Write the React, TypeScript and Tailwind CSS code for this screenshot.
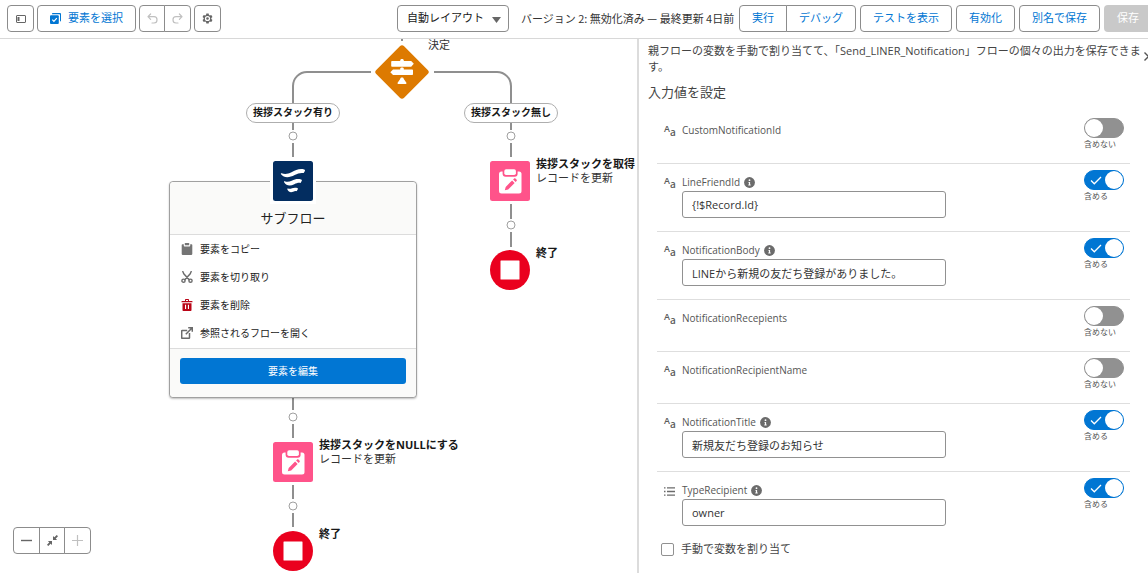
import React, { useState } from 'react';
import clsx from 'clsx';

type Field = {
  name: string;
  kind: 'text' | 'list';
  info?: boolean;
  value?: string;
};

const FIELDS: Field[] = [
  { name: 'CustomNotificationId', kind: 'text' },
  { name: 'LineFriendId', kind: 'text', info: true, value: '{!$Record.Id}' },
  { name: 'NotificationBody', kind: 'text', info: true, value: 'LINEから新規の友だち登録がありました。' },
  { name: 'NotificationRecepients', kind: 'text' },
  { name: 'NotificationRecipientName', kind: 'text' },
  { name: 'NotificationTitle', kind: 'text', info: true, value: '新規友だち登録のお知らせ' },
  { name: 'TypeRecipient', kind: 'list', info: true, value: 'owner' },
];

/* ---------- Icons ---------- */

const PanelIcon = () => (
  <svg className="w-[10px] h-2" viewBox="0 0 10 8" fill="none" stroke="#666">
    <rect x="0.5" y="0.5" width="9" height="7" rx="0.5" />
    <rect x="1.5" y="2" width="2" height="4" fill="#666" stroke="none" />
  </svg>
);

const SelectIcon = () => (
  <svg className="w-[11px] h-[11px]" viewBox="0 0 11 11" fill="none">
    <path d="M3 0h7a1 1 0 0 1 1 1v6.500a1 1 0 0 1-1 1V1.800a.6.6 0 0 0-.6-.6H2A1 1 0 0 1 3 0z" fill="#0176d3" />
    <rect x="0" y="2.200" width="8.800" height="8.800" rx="1" fill="#0176d3" />
    <path d="M2.300 6.600l1.600 1.700 2.900-3.200" stroke="#fff" strokeWidth="1.200" />
  </svg>
);

const UndoIcon = ({ flip }: { flip?: boolean }) => (
  <svg className={clsx('w-[11px] h-[11px]', flip && '-scale-x-100')} viewBox="0 0 11 11" fill="none" stroke="#c0c0c0" strokeWidth="1.200">
    <path d="M3.600 1L1 3.700l2.600 2.700M1 3.700h6a3 3 0 0 1 3 3v.3a3 3 0 0 1-3 3H5" strokeLinecap="round" strokeLinejoin="round" />
  </svg>
);

const GearIcon = () => (
  <svg className="w-[11px] h-[11px]" viewBox="0 0 24 24" fill="#666">
    <path
      fillRule="evenodd"
      d="M9.500 1h5l.7 3.300 1.900 1.100 3.200-1 2.500 4.300-2.500 2.200v2.200l2.500 2.200-2.500 4.300-3.200-1-1.900 1.100-.7 3.300h-5l-.7-3.300-1.900-1.100-3.200 1-2.500-4.300 2.500-2.200v-2.200L1.200 8.700l2.500-4.300 3.200 1 1.900-1.100zM12 6.300a5.700 5.700 0 1 0 0 11.400 5.700 5.700 0 0 0 0-11.400z"
    />
    <circle cx="12" cy="12" r="2.800" />
  </svg>
);

const ClipboardIcon = () => (
  <svg className="w-3 h-3" viewBox="0 0 12 12" fill="#747474">
    <path d="M1.500 1.300h1.300v1.200c0 .6.400 1 1 1h4.400c.6 0 1-.4 1-1V1.300h1.300c.5 0 .8.300.8.800v9c0 .5-.3.800-.8.800h-9c-.5 0-.8-.3-.8-.8v-9c0-.5.300-.8.800-.8z" />
    <path d="M4.300 0h3.400c.3 0 .5.200.5.500v1.700H3.800V.5c0-.3.200-.5.500-.5z" />
  </svg>
);

const CutIcon = () => (
  <svg className="w-3 h-3" viewBox="0 0 12 12" fill="none" stroke="#6b6b6b" strokeWidth="1.400">
    <path d="M1.800.5l1 2.300 5.400 5.900M10.200.5l-1 2.300-5.400 5.900" strokeLinecap="round" />
    <circle cx="2.500" cy="9.700" r="1.600" />
    <circle cx="9.500" cy="9.700" r="1.600" />
  </svg>
);

const TrashIcon = () => (
  <svg className="w-3 h-3" viewBox="0 0 12 12" fill="#ba0517">
    <path d="M1 2h3V1c0-.6.400-1 1-1h2c.6 0 1 .4 1 1v1h3c.3 0 .5.200.5.500V3.300H.5V2.500C.5 2.200.7 2 1 2zm4-1v1h2V1z" fillRule="evenodd" />
    <path d="M1.500 4.200h9V11c0 .6-.4 1-1 1h-7c-.6 0-1-.4-1-1zM4 5.800V10h1.100V5.800zm2.900 0V10H8V5.800z" fillRule="evenodd" />
  </svg>
);

const OpenIcon = () => (
  <svg className="w-3 h-3" viewBox="0 0 12 12" fill="none" stroke="#6b6b6b" strokeWidth="1.500">
    <path d="M6.200 3.500H1.200c-.3 0-.5.200-.5.500v6.800c0 .3.200.5.500.5H8c.3 0 .5-.2.500-.5V6" />
    <path d="M7.200.7h4.100v4.100M11 1L4.800 7.200" />
  </svg>
);

const DecisionIcon = () => (
  <svg className="w-[54px] h-[54px]" viewBox="0 0 54 54">
    <rect x="7.300" y="7.300" width="39.400" height="39.400" rx="3" transform="rotate(45 27 27)" fill="#dd7a01" />
    <g fill="#fff">
      <path d="M17 16h8.200v-.5c0-1 .7-1.500 1.800-1.500s1.800.5 1.800 1.500v.5h7.400l2.600 2.800-2.600 2.900H17c-.5 0-.8-.3-.8-.8v-4.100c0-.5.300-.8.800-.8z" />
      <path d="M18 24.400h7.200v-.6c0-1 .7-1.400 1.800-1.400s1.800.4 1.800 1.400v.6h8.400c.5 0 .8.300.8.800v4c0 .5-.3.800-.8.800H18l-2.700-2.800z" />
      <path d="M27 32.600c1 0 1.600.5 1.800 1.300l2.600 3.900c.3.600 0 1.200-.6 1.200h-7.600c-.6 0-.9-.6-.6-1.200l2.600-3.900c.2-.8.8-1.300 1.800-1.300z" />
    </g>
  </svg>
);

const SubflowIcon = () => (
  <svg className="w-10 h-10" viewBox="0 0 40 40">
    <rect width="40" height="40" rx="2.500" fill="#032d60" />
    <g fill="#fff">
      <path d="M8.600 12.300C12 13.600 15 13 18.500 11.300 22.500 9.200 26.500 7.200 31.200 8.500c.7.200 1 .8.700 1.400l-1.200 2.200c-3.200-.6-5.700.3-9 2-5.200 2.700-10.700 3.200-13.700-.9-.4-.6 0-1.100.6-.9z" />
      <path d="M11.700 20.300c2.600.9 4.600.5 7-.6 3.200-1.500 6-2.300 9.500-1.200.6.200.9.800.6 1.300l-1.200 2.100c-2.300-.4-4 .2-6.300 1.300-4 1.900-7.900 1.800-10.200-2-.3-.6 0-1.100.6-.9z" />
      <path d="M15 27.600c1.500.5 2.800.2 4-.3 1.700-.7 3.400-.9 5.300-.2.600.2.800.7.5 1.200l-1.100 1.900c-1.300-.3-2.300 0-3.500.5-2.400 1-4.500.5-5.800-2.200-.3-.6.100-1.100.6-.9z" />
    </g>
  </svg>
);

const RecordUpdateIcon = () => (
  <svg className="w-10 h-10" viewBox="0 0 40 40">
    <rect width="40" height="40" rx="2.500" fill="#ff538a" />
    <rect x="9" y="10.500" width="22.500" height="22" rx="2.500" fill="#fff" />
    <rect x="12.600" y="6.800" width="15" height="9" rx="3" fill="#ff538a" />
    <rect x="14.300" y="8.300" width="11.600" height="5.700" rx="1.800" fill="#fff" />
    <path d="M14.800 29.200l.9-3.300 6.400-6.400 2.500 2.500-6.400 6.400zM23.100 18.500l1.300-1.200c.7-.6 2.900 1.500 2.400 2.400l-1.200 1.300z" fill="#ff538a" />
  </svg>
);

const EndIcon = () => (
  <svg className="w-10 h-10" viewBox="0 0 40 40">
    <circle cx="20" cy="20" r="20" fill="#ea001e" />
    <rect x="10.500" y="10.500" width="19" height="19" rx="0.500" fill="#fff" />
  </svg>
);

const FitIcon = () => (
  <svg className="w-[11px] h-[11px]" viewBox="0 0 11 11" fill="#666" stroke="#666">
    <path d="M6 .9V5h4.100zM5 10.100V6H.9z" stroke="none" />
    <path d="M7.500 3.500L10.400.6M3.500 7.500L.6 10.400" strokeWidth="1.800" />
  </svg>
);

const InfoIcon = () => (
  <svg className="w-[11px] h-[11px]" viewBox="0 0 11 11">
    <circle cx="5.500" cy="5.500" r="5.400" fill="#6b6b6b" />
    <circle cx="5.500" cy="3.200" r="0.900" fill="#fff" />
    <path d="M4.400 4.900h1.700v2.700h.6v.8H4.300v-.8h.6V5.700h-.5z" fill="#fff" />
  </svg>
);

const ListIcon = () => (
  <svg className="w-[11px] h-[9px]" viewBox="0 0 11 9" stroke="#6b6b6b" strokeWidth="1.300">
    <path d="M0 .8h1.500M3 .8h8M0 4.500h1.500M3 4.500h8M0 8.200h1.500M3 8.200h8" />
  </svg>
);

/* ---------- Toolbar ---------- */

const box = 'h-[27px] flex items-center justify-center border border-[#8c8c8c] bg-white';
const link = 'px-3 text-[#0176d3] whitespace-nowrap';

const Toolbar = () => (
  <header className="h-[39px] shrink-0 flex items-center border-b border-[#d8d8d8] pl-[7px] pb-px overflow-hidden">
    <div className="flex gap-[3px]">
      <button aria-label="ツールボックス" className={clsx(box, 'w-[27px] rounded')}><PanelIcon /></button>
      <button className={clsx(box, link, 'w-[99px] gap-[7px] rounded')}>
        <SelectIcon />
        要素を選択
      </button>
      <div className="flex">
        <button aria-label="元に戻す" className={clsx(box, 'w-[26px] rounded-l')}><UndoIcon /></button>
        <button aria-label="やり直す" className={clsx(box, 'w-[27px] -ml-px rounded-r')}><UndoIcon flip /></button>
      </div>
      <button aria-label="設定" className={clsx(box, 'w-[27px] rounded')}><GearIcon /></button>
    </div>

    <div className="ml-auto -mr-1 shrink-0 flex items-center">
      <div className="relative">
        <select aria-label="レイアウト" className="h-[27px] w-28 appearance-none rounded border border-[#8c8c8c] bg-white pl-[9px] text-[#181818]">
          <option>自動レイアウト</option>
          <option>自由形式</option>
        </select>
        <svg className="absolute right-2 top-3 w-[9px] h-[6px] pointer-events-none" viewBox="0 0 9 6" fill="#666">
          <path d="M0 0h9L4.500 6z" />
        </svg>
      </div>
      <p className="w-[230px] pl-3 whitespace-nowrap font-['Noto_Sans_CJK_JP',sans-serif]">バージョン 2: 無効化済み — 最終更新 4日前</p>
      <div className="flex gap-1">
        <div className="flex">
          <button className={clsx(box, link, 'rounded-l')}>実行</button>
          <button className={clsx(box, link, '-ml-px rounded-r')}>デバッグ</button>
        </div>
        <button className={clsx(box, link, 'rounded')}>テストを表示</button>
        <button className={clsx(box, link, 'rounded')}>有効化</button>
        <button className={clsx(box, link, 'rounded')}>別名で保存</button>
        <button disabled className="h-[27px] px-[13px] rounded bg-[#c9c9c9] text-white whitespace-nowrap">保存</button>
      </div>
    </div>
  </header>
);

/* ---------- Canvas ---------- */

const Connectors = () => (
  <svg className="absolute left-0 top-0 w-[637px] h-[534px]" viewBox="0 0 637 534" fill="none">
    <g stroke="#8f8f8f" strokeWidth="2">
      <path d="M402 0v2" />
      <path d="M371 33h-64a14 14 0 0 0-14 14v17M434 33h63a14 14 0 0 1 14 14v17" />
      <path d="M293 84v7M293 104v14M511 84v7M511 104v14" />
      <path d="M511 165v15M511 193v15" />
      <path d="M293 359v12M293 385v14M293 446v14M293 474v14" />
    </g>
    <g stroke="#a0a0a0" fill="#fff">
      <circle cx="293" cy="97" r="4" />
      <circle cx="511" cy="97" r="4" />
      <circle cx="511" cy="186" r="4" />
      <circle cx="293" cy="378" r="4" />
      <circle cx="293" cy="467" r="4" />
    </g>
  </svg>
);

const Pill = ({ className, children }: { className: string; children: React.ReactNode }) => (
  <div className={clsx('absolute h-5 w-[94px] flex items-center justify-center rounded-full border border-[#aeaeae] bg-white pb-[2px] text-[10px] font-bold text-[#181818] whitespace-nowrap', className)}>
    {children}
  </div>
);

type NodeProps = { className: string; icon: React.ReactNode; title: string; subtitle?: string };

const FlowNode = ({ className, icon, title, subtitle }: NodeProps) => (
  <div className={clsx('absolute flex gap-[6px]', className)}>
    {icon}
    <div className="-mt-1 leading-[14px] text-[#181818] whitespace-nowrap">
      <p className="font-bold">{title}</p>
      {subtitle && <p className="text-[#333]">{subtitle}</p>}
    </div>
  </div>
);

const MENU = [
  { icon: <ClipboardIcon />, label: '要素をコピー' },
  { icon: <CutIcon />, label: '要素を切り取り' },
  { icon: <TrashIcon />, label: '要素を削除' },
  { icon: <OpenIcon />, label: '参照されるフローを開く' },
];

const SubflowCard = () => (
  <div className="absolute left-[169px] top-[142px] w-[248px] rounded border border-[#a0a0a0] bg-white shadow-[0_1px_2px_rgba(0,0,0,0.25)] text-[#222]">
    <div className="absolute left-[100px] -top-[24px] bg-white p-[3px]">
      <SubflowIcon />
    </div>
    <h2 className="h-[53px] pt-[26px] rounded-t border-b border-[#dcdcdc] bg-[#fafaf9] text-center text-[13px] leading-5">サブフロー</h2>
    <ul className="text-[10px] pb-px">
      {MENU.map((item) => (
        <li key={item.label}>
          <button className="w-full h-7 flex items-center gap-[7px] pl-[11px] mt-px first:mt-0">
            {item.icon}
            {item.label}
          </button>
        </li>
      ))}
    </ul>
    <div className="border-t border-[#dcdcdc] rounded-b bg-[#fafaf9] px-[10px] pt-[9px] pb-[13px]">
      <button className="block w-full h-[26px] rounded-[3px] bg-[#0176d3] text-[10px] text-white">要素を編集</button>
    </div>
  </div>
);

const Canvas = () => (
  <main className="relative flex-1 min-w-0 bg-white">
    <Connectors />
    <div className="absolute left-[375px] top-[6px]"><DecisionIcon /></div>
    <p className="absolute left-[428px] top-0 leading-[11px]">決定</p>
    <Pill className="left-[246px] top-16">挨拶スタック有り</Pill>
    <Pill className="left-[464px] top-16">挨拶スタック無し</Pill>
    <SubflowCard />
    <FlowNode className="left-[490px] top-[122px]" icon={<RecordUpdateIcon />} title="挨拶スタックを取得" subtitle="レコードを更新" />
    <FlowNode className="left-[490px] top-[211px]" icon={<EndIcon />} title="終了" />
    <FlowNode className="left-[273px] top-[403px]" icon={<RecordUpdateIcon />} title="挨拶スタックをNULLにする" subtitle="レコードを更新" />
    <FlowNode className="left-[273px] top-[492px]" icon={<EndIcon />} title="終了" />

    <div className="absolute left-[13px] bottom-[19px] flex">
      <button aria-label="縮小" className={clsx(box, 'w-[27px] rounded-l')}>
        <svg className="w-[11px] h-[11px]" viewBox="0 0 11 11" stroke="#666" strokeWidth="1.400"><path d="M0 5.500h11" /></svg>
      </button>
      <button aria-label="全体を表示" className={clsx(box, 'w-[26px] -ml-px')}><FitIcon /></button>
      <button aria-label="拡大" className={clsx(box, 'w-[27px] -ml-px rounded-r')}>
        <svg className="w-[11px] h-[11px]" viewBox="0 0 11 11" stroke="#c0c0c0" strokeWidth="1.200"><path d="M0 5.500h11M5.500 0v11" /></svg>
      </button>
    </div>
  </main>
);

/* ---------- Properties panel ---------- */

const Toggle = ({ id, on, onChange }: { id: string; on: boolean; onChange: () => void }) => (
  <label className="ml-auto w-[46px] shrink-0 cursor-pointer">
    <input
      type="checkbox"
      role="switch"
      aria-label={id}
      checked={on}
      onChange={onChange}
      className="peer sr-only"
    />
    <span className="flex items-center w-10 h-5 rounded-full border border-[#919191] bg-[#919191] peer-checked:border-[#0176d3] peer-checked:bg-[#0176d3]">
      {on && (
        <svg className="ml-[5px] w-3 h-[9px]" viewBox="0 0 12 9" fill="none" stroke="#fff" strokeWidth="1.300">
          <path d="M1 4.500L4.300 7.800 11 1" />
        </svg>
      )}
      <span className={clsx('w-[18px] h-[18px] rounded-full bg-white', on && 'ml-auto')} />
    </span>
    <span className="block pt-px text-[8px] leading-[10px] text-[#555] whitespace-nowrap">{on ? '含める' : '含めない'}</span>
  </label>
);

const FieldRow = ({ field }: { field: Field }) => {
  const [on, setOn] = useState(field.value !== undefined);
  const [value, setValue] = useState(field.value ?? '');

  return (
    <li className={clsx('flex border-t border-[#dedede] first:border-transparent pt-[6px] pl-[7px]', field.value === undefined ? 'h-[52px]' : 'h-[68px]')}>
      <div className="w-[18px] shrink-0 pt-[6px] text-[#5c5c5c]">
        {field.kind === 'text' ? (
          <span className="flex items-start leading-none" aria-hidden="true">
            <span className="text-[9px] leading-[9px] font-semibold">A</span>
            <span className="pt-1 text-[10px] leading-[9px] font-semibold">a</span>
          </span>
        ) : (
          <span className="block pt-[3px]"><ListIcon /></span>
        )}
      </div>
      <div className="w-[264px]">
        <div className="h-[21px] pt-[3px] flex items-center gap-1 text-[10px] text-[#555]">
          <label htmlFor={field.name}>{field.name}</label>
          {field.info && <InfoIcon />}
        </div>
        {on && field.value !== undefined && (
          <input
            id={field.name}
            value={value}
            onChange={(e) => setValue(e.target.value)}
            className="block w-full h-[27px] rounded-[3px] border border-[#919191] px-[9px] text-[#333]"
          />
        )}
      </div>
      <Toggle id={field.name} on={on} onChange={() => setOn(!on)} />
    </li>
  );
};

const PropertiesPanel = () => (
  <aside className="relative w-[511px] shrink-0 overflow-hidden border-l-2 border-[#dcdcdc] bg-white pl-[9px] pr-[18px] pt-1 text-[#444]">
    <p className="-mr-[14px] leading-4">
      親フローの変数を手動で割り当てて、「Send_LINER_Notification」フローの個々の出力を保存できます。
    </p>
    <h3 className="pt-2 text-[13px] leading-[18px]">入力値を設定</h3>
    <ul className="ml-[9px] pt-[10px]">
      {FIELDS.map((field) => (
        <FieldRow key={field.name} field={field} />
      ))}
    </ul>
    <label className="ml-[13px] mt-[2px] flex items-center gap-[7px]">
      <input type="checkbox" className="appearance-none w-[13px] h-[13px] rounded-[2px] border border-[#919191] bg-white" />
      手動で変数を割り当て
    </label>
    <button aria-label="閉じる" className="absolute -right-[5px] top-[13px]">
      <svg className="w-[9px] h-[9px]" viewBox="0 0 9 9" stroke="#555" strokeWidth="1.400"><path d="M.5.5l8 8M8.500.5l-8 8" /></svg>
    </button>
  </aside>
);

const App: React.FC = () => {
  return (
    <div className="h-screen flex flex-col overflow-hidden bg-white text-[11px] text-[#333] font-['Open_Sans','Noto_Sans_CJK_JP',sans-serif]">
      <Toolbar />
      <div className="flex-1 min-h-0 flex">
        <Canvas />
        <PropertiesPanel />
      </div>
    </div>
  );
};

export default App;
